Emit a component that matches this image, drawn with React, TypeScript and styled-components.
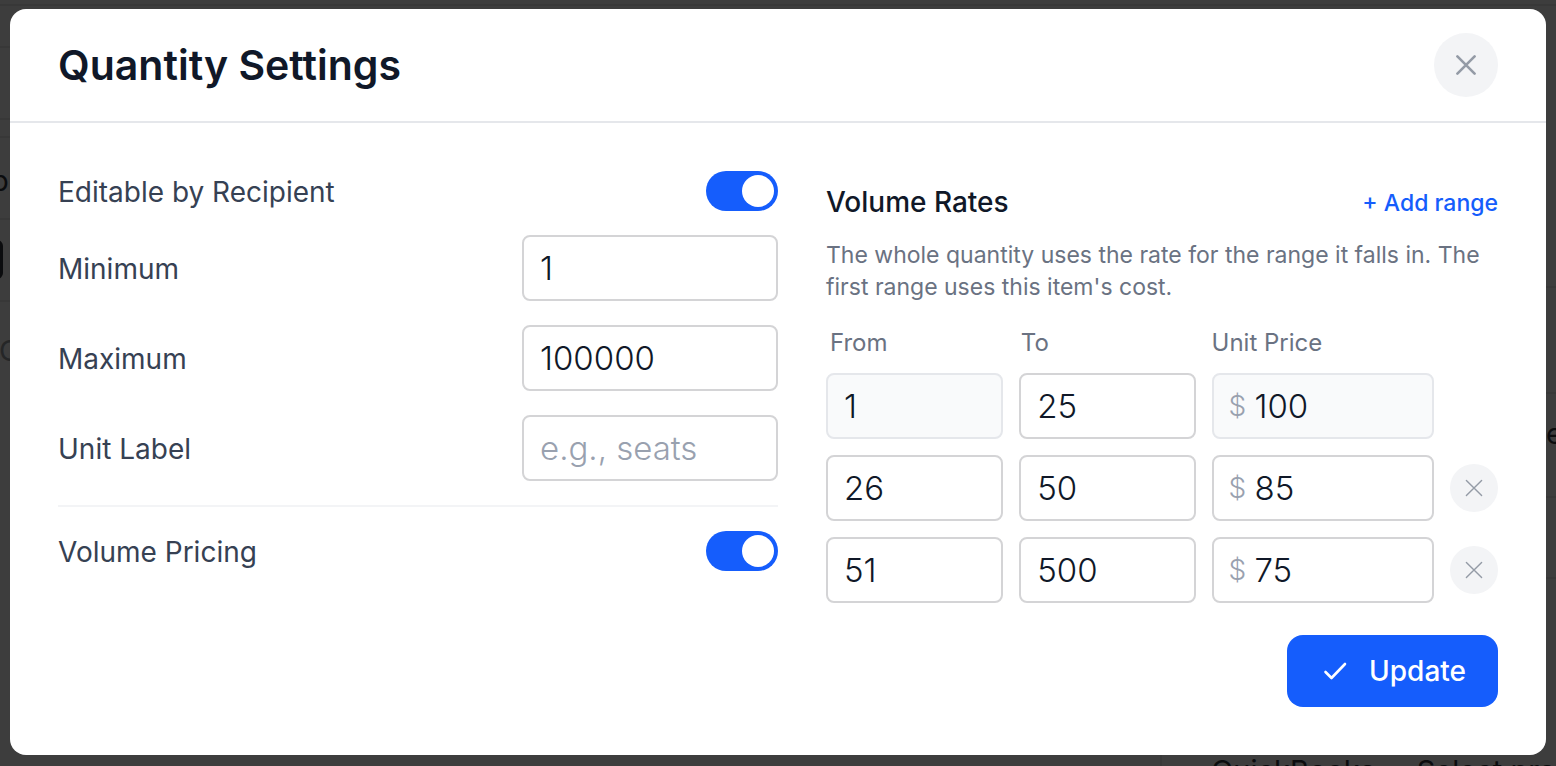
import React, { useState } from "react";
import styled, { createGlobalStyle } from "styled-components";

const Global = createGlobalStyle`
  *, *::before, *::after { box-sizing: border-box; }
  body { margin: 0; background: #3d3d3d; font-family: Inter, "Liberation Sans", sans-serif; color: #101828; }
  button, input { font: inherit; }
`;

const Screen = styled.div`
  position: relative;
  min-height: 100vh;
  overflow: hidden;
  padding: 9px 10px 11px;
  background: #3d3d3d;
`;

const Backdrop = styled.div`
  position: absolute;
  inset: 0;
  font-size: 29px;
  line-height: 32px;
  color: #0b0c0e;
`;

const Rule = styled.div<{ $y: number; $side?: "left" | "right" }>`
  position: absolute;
  top: ${(p) => p.$y}px;
  left: ${(p) => (p.$side === "right" ? "50%" : "0")};
  right: ${(p) => (p.$side === "left" ? "50%" : "0")};
  height: 2px;
  background: #383838;
`;

const ColumnRule = styled.div`
  position: absolute;
  top: 50%;
  bottom: 0;
  right: 394px;
  width: 2px;
  background: #383838;
`;

const Peek = styled.span<{ $top: number; $left?: number; $right?: number; $faint?: boolean }>`
  position: absolute;
  top: ${(p) => p.$top}px;
  left: ${(p) => (p.$left === undefined ? "auto" : `${p.$left}px`)};
  right: ${(p) => (p.$right === undefined ? "auto" : `${p.$right}px`)};
  white-space: nowrap;
  color: ${(p) => (p.$faint ? "#252627" : "#0b0c0e")};
`;

const PeekBox = styled.div`
  position: absolute;
  top: 240px;
  left: -40px;
  width: 43px;
  height: 39px;
  border: 3px solid #0b0c0e;
  border-radius: 6px;
`;

const Dialog = styled.section`
  position: relative;
  min-height: calc(100vh - 20px);
  border-radius: 16px;
  background: #fff;
`;

const Header = styled.header`
  display: flex;
  align-items: center;
  justify-content: space-between;
  height: 114px;
  padding: 0 48px;
  border-bottom: 2px solid #e5e7eb;
`;

const Title = styled.h1`
  margin: 0;
  font-size: 41px;
  line-height: 48px;
  font-weight: 600;
`;

const RoundButton = styled.button<{ $size: number }>`
  display: grid;
  place-items: center;
  width: ${(p) => p.$size}px;
  height: ${(p) => p.$size}px;
  padding: 0;
  border: 0;
  border-radius: 50%;
  background: #f3f4f6;
  color: #949ba6;
  cursor: pointer;
`;

const Body = styled.div`
  display: grid;
  grid-template-columns: 720fr 672fr;
  gap: 48px;
  padding: 48px 48px 32px;
`;

const Settings = styled.div`
  display: flex;
  flex-direction: column;
  gap: 24px;
`;

const SettingRow = styled.div`
  display: flex;
  align-items: center;
  justify-content: space-between;
`;

const SettingLabel = styled.label`
  padding-top: 2px;
  font-size: 28px;
  line-height: 38px;
  color: #364153;
`;

const Divider = styled.hr`
  width: 100%;
  height: 2px;
  margin: 0;
  border: 0;
  background: #f3f4f6;
`;

const Switch = styled.input`
  appearance: none;
  display: flex;
  align-items: center;
  width: 72px;
  height: 40px;
  margin: 0;
  padding: 4px;
  border-radius: 20px;
  background: #d1d5dc;
  cursor: pointer;
  &::before {
    content: "";
    width: 32px;
    height: 32px;
    border-radius: 50%;
    background: #fff;
  }
  &:checked {
    justify-content: flex-end;
    background: #155dfc;
  }
`;

const Field = styled.input`
  width: 100%;
  min-width: 0;
  height: 66px;
  padding: 0 16px;
  border: 2px solid #d4d4d6;
  border-radius: 8px;
  background: #fff;
  color: #101828;
  font-size: 33px;
  font-weight: 300;
  outline: 0;
  &::placeholder { color: #99a1af; opacity: 1; }
  &:read-only { background: #f9fafb; border-color: #e5e7eb; }
`;

const SettingField = styled(Field)`
  width: 256px;
`;

const Rates = styled.div`
  display: flex;
  flex-direction: column;
  padding-top: 11px;
`;

const RatesHead = styled.div`
  display: flex;
  align-items: center;
  justify-content: space-between;
`;

const RatesTitle = styled.h2`
  margin: 0;
  font-size: 28px;
  line-height: 40px;
  font-weight: 500;
`;

const AddRange = styled.button`
  padding: 2px 0 0;
  border: 0;
  background: none;
  color: #155dfc;
  font-size: 23px;
  line-height: 32px;
  font-weight: 500;
  cursor: pointer;
`;

const Help = styled.p`
  margin: 17px 0 24px;
  font-size: 23px;
  line-height: 32px;
  color: #6a7282;
`;

const RateGrid = styled.div`
  display: grid;
  grid-template-columns: 4fr 4fr 5fr 48px;
  align-items: center;
  gap: 16px;
`;

const RateLabels = styled(RateGrid)`
  margin-bottom: 14px;
  padding: 0 4px;
  font-size: 24px;
  line-height: 32px;
  color: #6a7282;
`;

const RateRows = styled.div`
  display: flex;
  flex-direction: column;
  gap: 16px;
`;

const Price = styled.div`
  position: relative;
`;

const Currency = styled.span`
  position: absolute;
  top: 13px;
  left: 16px;
  font-size: 28px;
  line-height: 40px;
  font-weight: 300;
  color: #99a1af;
  pointer-events: none;
`;

const PriceField = styled(Field)`
  padding-left: 40px;
`;

const Footer = styled.footer`
  display: flex;
  justify-content: flex-end;
  padding: 0 48px 48px;
`;

const UpdateButton = styled.button`
  display: flex;
  align-items: center;
  gap: 18px;
  height: 72px;
  padding: 0 32px;
  border: 0;
  border-radius: 16px;
  background: #155dfc;
  color: #fff;
  font-size: 28px;
  line-height: 40px;
  font-weight: 500;
  cursor: pointer;
`;

const Cross = ({ size, stroke }: { size: number; stroke: number }) => (
  <svg width={size} height={size} viewBox={`0 0 ${size} ${size}`} fill="none" stroke="currentColor" strokeWidth={stroke} strokeLinecap="round" aria-hidden="true">
    <path d={`M1.4 1.4L${size - 1.4} ${size - 1.4}M${size - 1.4} 1.4L1.4 ${size - 1.4}`} />
  </svg>
);

const rates = [
  { from: "1", to: "25", price: "100", fixed: true },
  { from: "26", to: "50", price: "85", fixed: false },
  { from: "51", to: "500", price: "75", fixed: false },
];

export default function App() {
  const [editable, setEditable] = useState(true);
  const [volume, setVolume] = useState(true);
  return (
    <Screen>
      <Global />
      <Backdrop aria-hidden="true">
        <Rule $y={4} />
        <Rule $y={46} $side="left" />
        <Rule $y={118} $side="left" />
        <Rule $y={136} $side="left" />
        <Rule $y={218} $side="left" />
        <Rule $y={300} $side="left" />
        <Rule $y={286} $side="right" />
        <Rule $y={392} $side="right" />
        <Rule $y={496} $side="right" />
        <Rule $y={577} $side="right" />
        <ColumnRule />
        <Peek $top={165} $left={-9}>p</Peek>
        <PeekBox />
        <Peek $top={335} $left={-1} $faint>C</Peek>
        <Peek $top={418} $right={-7}>e</Peek>
        <Peek $top={755} $right={181}>QuickBooks</Peek>
        <Peek $top={755} $right={0}>Select pro</Peek>
      </Backdrop>
      <Dialog role="dialog" aria-labelledby="dialog-title">
        <Header>
          <Title id="dialog-title">Quantity Settings</Title>
          <RoundButton type="button" $size={64} aria-label="Close"><Cross size={20} stroke={2.6} /></RoundButton>
        </Header>
        <Body>
          <Settings>
            <SettingRow>
              <SettingLabel htmlFor="editable">Editable by Recipient</SettingLabel>
              <Switch id="editable" type="checkbox" role="switch" checked={editable} onChange={(e) => setEditable(e.target.checked)} />
            </SettingRow>
            <SettingRow>
              <SettingLabel htmlFor="minimum">Minimum</SettingLabel>
              <SettingField id="minimum" defaultValue="1" inputMode="numeric" />
            </SettingRow>
            <SettingRow>
              <SettingLabel htmlFor="maximum">Maximum</SettingLabel>
              <SettingField id="maximum" defaultValue="100000" inputMode="numeric" />
            </SettingRow>
            <SettingRow>
              <SettingLabel htmlFor="unit">Unit Label</SettingLabel>
              <SettingField id="unit" placeholder="e.g., seats" />
            </SettingRow>
            <Divider />
            <SettingRow>
              <SettingLabel htmlFor="volume">Volume Pricing</SettingLabel>
              <Switch id="volume" type="checkbox" role="switch" checked={volume} onChange={(e) => setVolume(e.target.checked)} />
            </SettingRow>
          </Settings>
          <Rates>
            <RatesHead>
              <RatesTitle>Volume Rates</RatesTitle>
              <AddRange type="button">+ Add range</AddRange>
            </RatesHead>
            <Help>The whole quantity uses the rate for the range it falls in. The first range uses this item's cost.</Help>
            <RateLabels>
              <label id="from-label" htmlFor="from-0">From</label>
              <label id="to-label" htmlFor="to-0">To</label>
              <label id="price-label" htmlFor="price-0">Unit Price</label>
            </RateLabels>
            <RateRows>
              {rates.map((rate, i) => (
                <RateGrid key={rate.from}>
                  <Field id={`from-${i}`} aria-labelledby="from-label" defaultValue={rate.from} readOnly={rate.fixed} />
                  <Field id={`to-${i}`} aria-labelledby="to-label" defaultValue={rate.to} />
                  <Price>
                    <Currency>$</Currency>
                    <PriceField id={`price-${i}`} aria-labelledby="price-label" defaultValue={rate.price} readOnly={rate.fixed} />
                  </Price>
                  {!rate.fixed && (
                    <RoundButton type="button" $size={48} aria-label="Remove range"><Cross size={18} stroke={1.4} /></RoundButton>
                  )}
                </RateGrid>
              ))}
            </RateRows>
          </Rates>
        </Body>
        <Footer>
          <UpdateButton type="submit">
            <svg width="32" height="32" viewBox="0 0 32 32" fill="none" stroke="currentColor" strokeWidth="2.6" strokeLinecap="round" strokeLinejoin="round" aria-hidden="true">
              <path d="M6.5 17L12.5 23L26 9" />
            </svg>
            Update
          </UpdateButton>
        </Footer>
      </Dialog>
    </Screen>
  );
}
